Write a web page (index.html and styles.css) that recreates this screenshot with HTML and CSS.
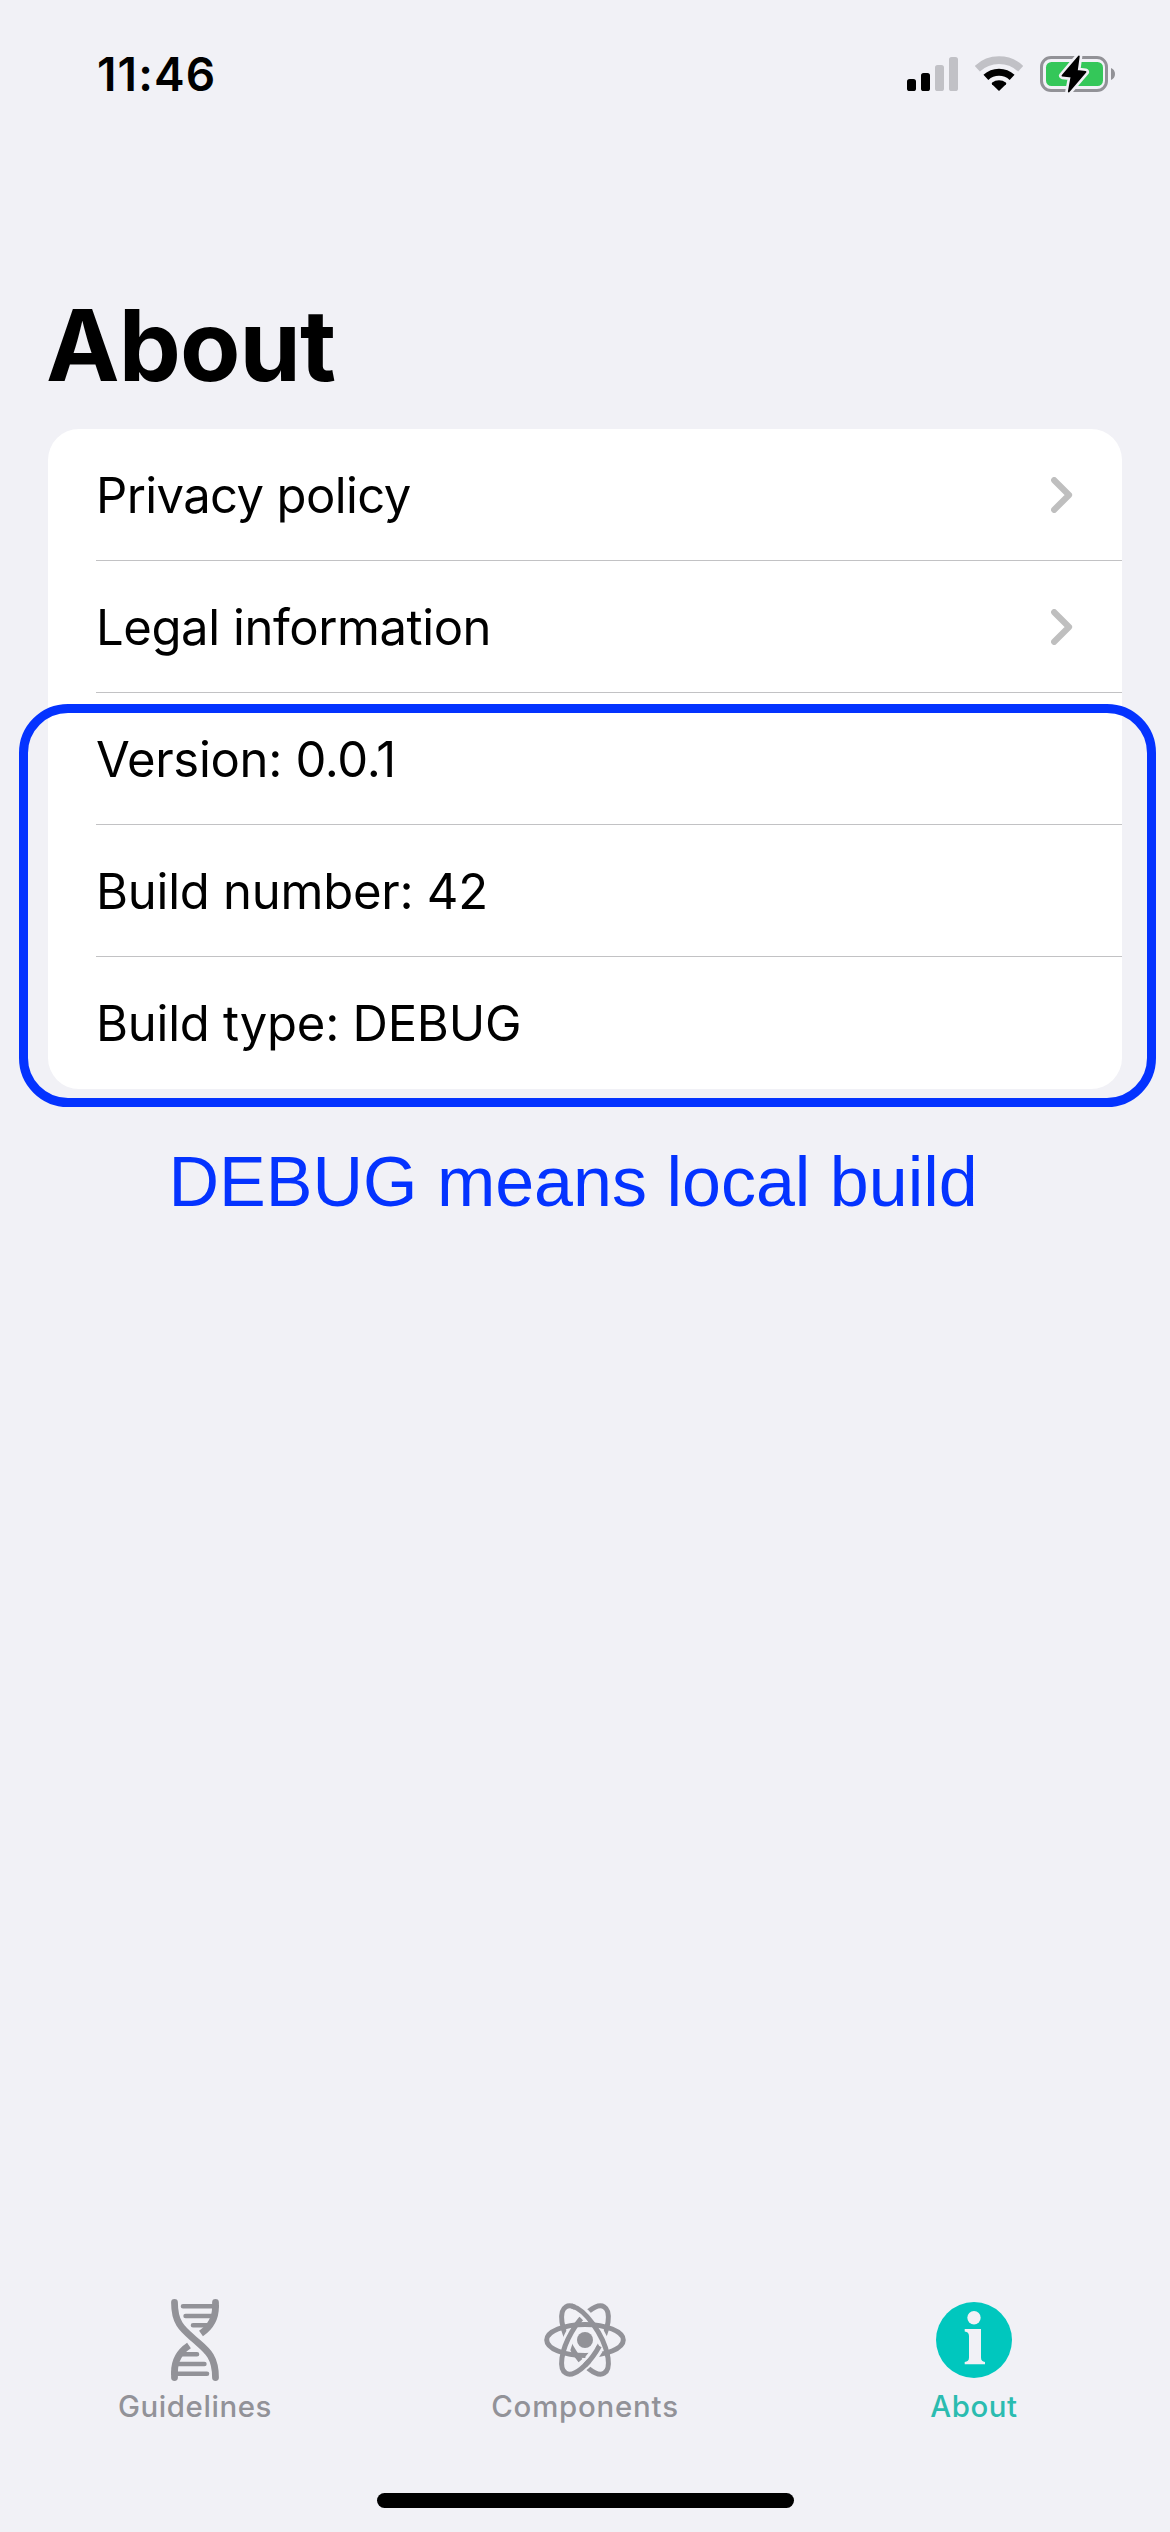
FILE: index.html
```html
<!DOCTYPE html>
<html lang="en">
<head>
<meta charset="utf-8">
<title>About</title>
<link rel="stylesheet" href="styles.css">
</head>
<body>
<div class="screen">
  <header class="status-bar">
    <div class="time">11:46</div>
    <div class="indicators">
      <svg class="signal" width="51" height="40" viewBox="0 0 51 40">
        <rect x="0" y="25" width="9" height="12" rx="2.6" fill="#000"/>
        <rect x="14" y="19" width="9" height="18" rx="2.6" fill="#000"/>
        <rect x="28" y="11" width="9" height="26" rx="2.6" fill="#c1c1c6"/>
        <rect x="42" y="3" width="9" height="34" rx="2.6" fill="#c1c1c6"/>
      </svg>
      <svg class="wifi" width="48" height="40" viewBox="0 0 48 40" fill="none">
        <path d="M2.3 14.7A31.8 31.8 0 0 1 45.7 14.7" stroke="#c1c1c6" stroke-width="7.6"/>
        <path d="M10.9 23.4A19.3 19.3 0 0 1 37.1 23.4" stroke="#000" stroke-width="7.2"/>
        <path d="M24 37L17 30.2Q16.3 29.4 17.2 28.6A11.2 11.2 0 0 1 30.8 28.6Q31.7 29.4 31 30.2Z" fill="#000"/>
      </svg>
      <svg class="battery" width="76" height="40" viewBox="0 0 76 40">
        <rect x="1.5" y="3.5" width="65" height="33" rx="9.5" fill="none" stroke="#929297" stroke-width="3"/>
        <rect x="6" y="8" width="57" height="24" rx="5.5" fill="#34c759"/>
        <path d="M71 14C73.5 15 75 17.3 75 20S73.5 25 71 26Z" fill="#929297"/>
        <path d="M38.8 2.5L22.5 21.7L31.5 22.7L28.8 37.5L45.5 18L36.8 17Z" fill="#000" stroke="#f1f1f6" stroke-width="7" stroke-linejoin="round"/>
        <path d="M38.8 2.5L22.5 21.7L31.5 22.7L28.8 37.5L45.5 18L36.8 17Z" fill="#000" stroke="#000" stroke-width="1.8" stroke-linejoin="round"/>
      </svg>
    </div>
  </header>

  <main class="content">
    <h1 class="title">About</h1>
    <div class="list-area">
      <ul class="list">
        <li class="row privacy"><span>Privacy policy</span>
          <svg class="chevron" width="22" height="36" viewBox="0 0 22 36"><path d="M3.2 3.2L18 18L3.2 32.8"/></svg></li>
        <li class="row legal"><span>Legal information</span>
          <svg class="chevron" width="22" height="36" viewBox="0 0 22 36"><path d="M3.2 3.2L18 18L3.2 32.8"/></svg></li>
        <li class="row version"><span>Version: 0.0.1</span></li>
        <li class="row build"><span>Build number: 42</span></li>
        <li class="row build"><span>Build type: DEBUG</span></li>
      </ul>
      <div class="highlight"></div>
    </div>
    <p class="note">DEBUG means local build</p>
  </main>

  <nav class="tabs">
    <a class="tab guidelines">
      <svg width="48" height="82" viewBox="0 0 48 82" fill="none" stroke="#929298">
        <g stroke-width="4.6" stroke-linecap="round">
          <path d="M12 7.3H43M14.6 17H42M22 26.3H37M10 55.3H26M6 65H33.4M4 74.7H36"/>
        </g>
        <g stroke-width="6.8">
          <path d="M44.5 6V8C44.5 20 38 29 30 34.5"/>
          <path d="M3.5 76V73C3.5 60 9 52.5 18 46.5"/>
          <path stroke-linecap="round" d="M44.5 3.5V7M3.5 74V78.5"/>
          <path stroke-linecap="round" d="M3.5 3.5C3.5 25 12 30.5 24 41S44.5 57 44.5 78.5"/>
        </g>
      </svg>
      <span>Guidelines</span>
    </a>
    <a class="tab components">
      <svg width="82" height="82" viewBox="0 0 82 82" fill="none" stroke="#929298" stroke-width="5">
        <g transform="translate(41 41)">
          <g transform="rotate(60)"><ellipse rx="38.3" ry="15.5"/></g>
          <g transform="rotate(-60)">
            <path d="M0 15.5A38.3 15.5 0 0 1 3.3 -15.44" stroke="#f1f1f6" stroke-width="11"/>
            <ellipse rx="38.3" ry="15.5"/>
          </g>
          <g transform="rotate(60)">
            <path d="M-33.2 -7.75A38.3 15.5 0 0 1 22 -12.7" stroke="#f1f1f6" stroke-width="11"/>
            <path d="M-36 -5.3A38.3 15.5 0 0 1 25 -11.7"/>
          </g>
          <ellipse rx="38.3" ry="15.5"/>
          <g transform="rotate(-60)">
            <path d="M-1.3 15.5A38.3 15.5 0 0 1 -16 14.1" stroke="#f1f1f6" stroke-width="11"/>
            <path d="M2 15.48A38.3 15.5 0 0 1 -22 12.69"/>
          </g>
          <circle r="8" fill="#929298" stroke="none"/>
        </g>
      </svg>
      <span>Components</span>
    </a>
    <a class="tab about">
      <svg width="76" height="82" viewBox="0 0 76 82">
        <circle cx="38" cy="41" r="38" fill="#00c7be"/>
        <circle cx="38" cy="18.7" r="6.7" fill="#f1f1f6"/>
        <path d="M28.7 30H45V58.5C45 61.5 46.5 62.5 49 63V65.2H28.7V63C31.5 62.5 33 61.5 33 58.5V37C33 34 31.5 32.8 28.7 32.4Z" fill="#f1f1f6"/>
      </svg>
      <span>About</span>
    </a>
  </nav>
  <div class="home-indicator"></div>
</div>
</body>
</html>
```

FILE: styles.css
```css
* { box-sizing: border-box; margin: 0; padding: 0; }

body { background: #f1f1f6; }

.screen {
  width: 1170px;
  height: 2532px;
  display: flex;
  flex-direction: column;
  background: #f1f1f6;
  font-family: Inter, "Liberation Sans", sans-serif;
  color: #000;
}

.status-bar {
  height: 148px;
  display: flex;
  align-items: center;
  justify-content: space-between;
  padding: 0 54px 0 97px;
}
.time { font-size: 46px; font-weight: 600; letter-spacing: 1.15px; }
.indicators { display: flex; align-items: center; }
.wifi { margin-left: 17px; }
.battery { margin-left: 17px; }

.content { padding: 138px 48px 0; flex: 1; }
.title {
  margin: 0 0 25px -2px;
  font-size: 98.6px;
  font-weight: 700;
  line-height: 118px;
  letter-spacing: -0.9px;
}

.list-area { position: relative; }
.list {
  list-style: none;
  background: #fff;
  border-radius: 31px;
  padding-left: 48px;
}
.row {
  height: 132px;
  display: flex;
  align-items: center;
  justify-content: space-between;
  padding: 1px 49px 0 0;
  border-bottom: 1px solid #c2c2c4;
  font-size: 49px;
}
.row:last-child { border-bottom-color: transparent; }
.privacy { letter-spacing: -0.62px; }
.legal { letter-spacing: -0.42px; }
.version { letter-spacing: -0.32px; }
.build { letter-spacing: -0.25px; }
.chevron path {
  fill: none;
  stroke: #bfbfbf;
  stroke-width: 6.2;
  stroke-linecap: round;
  stroke-linejoin: round;
}

.highlight {
  position: absolute;
  left: -29px;
  right: -33.5px;
  top: 274.5px;
  bottom: -17.5px;
  border: 9px solid #0433ff;
  border-radius: 49px;
}

.note {
  margin: 53px 0 0 120.5px;
  font-family: "Liberation Sans", sans-serif;
  font-size: 70px;
  line-height: 80px;
  color: #0433ff;
}

.tabs {
  display: grid;
  grid-template-columns: repeat(3, 1fr);
  margin-bottom: 68px;
}
.tab {
  display: flex;
  flex-direction: column;
  align-items: center;
  gap: 8px;
  font-size: 29.4px;
  font-weight: 500;
  line-height: 36px;
  color: #929298;
}
.guidelines { letter-spacing: 0.6px; }
.components { letter-spacing: 0.8px; }
.about { letter-spacing: 0.6px; color: #2bbcb0; }
.tab.about { padding-right: 2px; }

.home-indicator {
  width: 417px;
  height: 15px;
  margin: 0 auto 24px;
  border-radius: 8px;
  background: #000;
}
```
